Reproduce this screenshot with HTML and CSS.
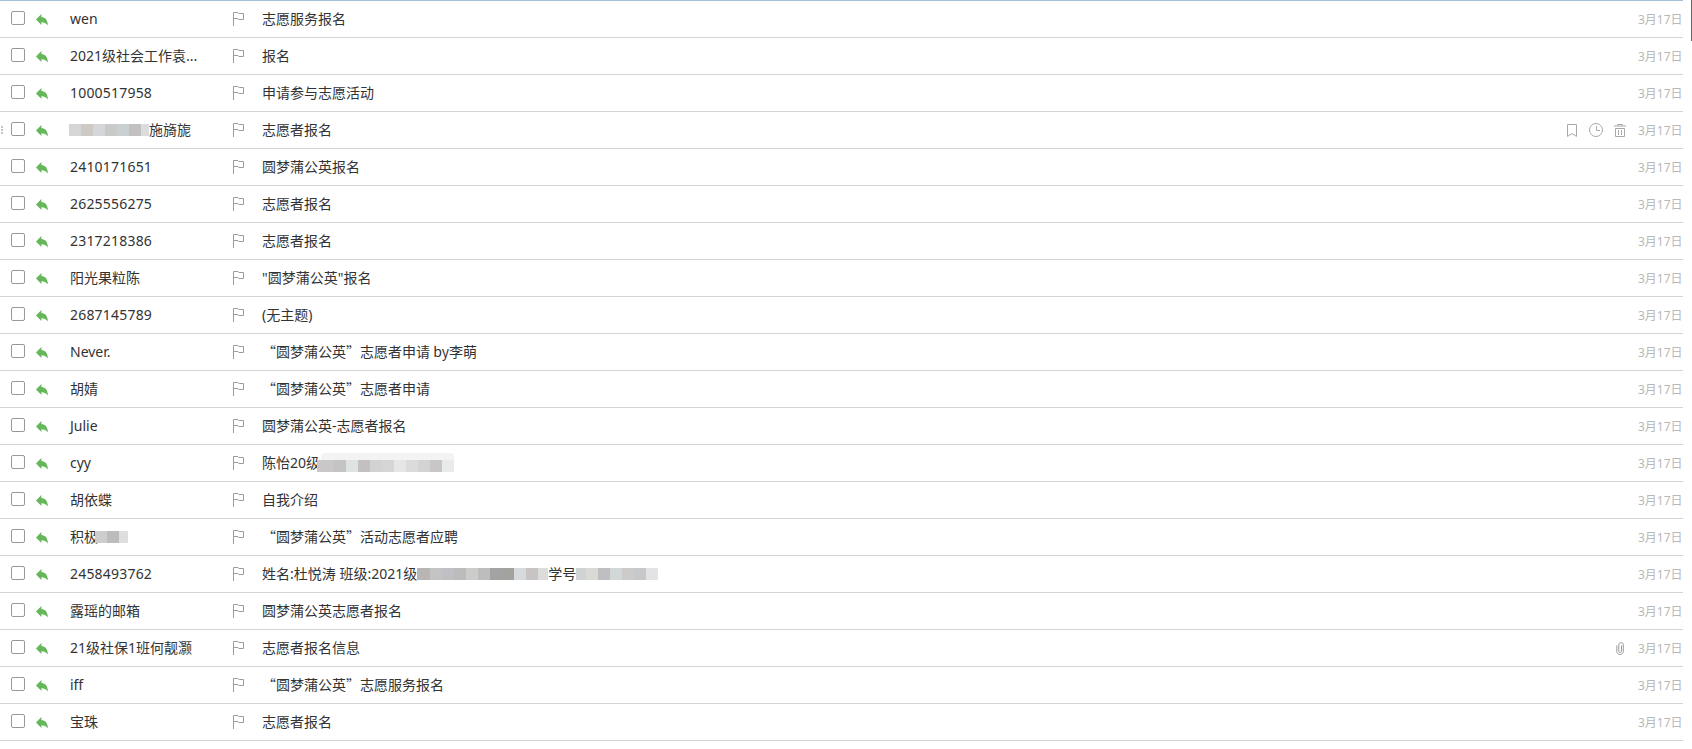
FILE: index.html
```html
<!DOCTYPE html>
<html lang="zh-CN">
<head>
    <meta charset="UTF-8">
    <meta name="viewport" content="width=device-width, initial-scale=1.0">
    <title>收件箱</title>
    <link rel="stylesheet" href="styles.css">
</head>
<body>
    <svg class="defs" width="0" height="0">
        <symbol id="i-reply" viewBox="0 0 12 12"><path d="M0 5.4 L5.4 0 V3.1 C9.2 3.3 11.9 6.2 11.9 11.6 C10.6 9.6 8.6 8.5 5.4 8.3 V11 Z" fill="#65b75a"/></symbol>
        <symbol id="i-flag" viewBox="0 0 11 15"><path d="M.5 15 V1.5 H5 L5.8 2.5 H10.5 V8.5 H5.8 L5 7.5 H.5" fill="none" stroke="#9c9c9c"/></symbol>
        <symbol id="i-bookmark" viewBox="0 0 10 13"><path d="M.5 .5 H9.5 V12.4 L5 9.6 L.5 12.4 Z" fill="none" stroke="#a8a8a8"/></symbol>
        <symbol id="i-clock" viewBox="0 0 14 14"><circle cx="7" cy="7" r="6.5" fill="none" stroke="#a8a8a8"/><path d="M7.5 3 V7.5 H11" fill="none" stroke="#a8a8a8"/></symbol>
        <symbol id="i-trash" viewBox="0 0 12 13"><path d="M3.5 1.5 V.5 H8.5 V1.5 M0 2 H12 M1.5 4.5 H10.5 V12.5 H1.5 Z M4.5 6 V11 M7.5 6 V11" fill="none" stroke="#a8a8a8"/></symbol>
        <symbol id="i-clip" viewBox="0 0 8 13"><path d="M5.5 3.5 V9.5 C5.5 10.8 2.8 10.8 2.8 9.5 V2.5 C2.8 0 7.3 0 7.3 2.5 V9.5 C7.3 13.5 .8 13.5 .8 9.5 V3.5" fill="none" stroke="#9a9a9a"/></symbol>
    </svg>

    <div class="mail-list" id="mailList"></div>
    <div class="scroll-mark"></div>

    <script>
        // mosaic blocks that hide part of a name; first/last are the widths of the cut-off end blocks
        const b = (colors, first = 12, last = 12, cls = '') => {
            const blocks = colors.map((c, i) => {
                const w = i === 0 ? first : i === colors.length - 1 ? last : 12;
                return `<i style="background:${c};width:${w}px"></i>`;
            });
            return `<span class="blur ${cls}">${blocks.join('')}</span>`;
        };

        const mails = [
            { from: 'wen', subject: '志愿服务报名' },
            { from: '2021级社会工作袁...', subject: '报名' },
            { from: '1000517958', subject: '申请参与志愿活动' },
            { from: b(['#d6d5d6', '#cdcac4', '#d5d6da', '#c9c9ca', '#cacfd2', '#c2c0c0', '#dcdcde'], 12, 8, 'pull-name') + '施旖旎', subject: '志愿者报名', hover: true },
            { from: '2410171651', subject: '圆梦蒲公英报名' },
            { from: '2625556275', subject: '志愿者报名' },
            { from: '2317218386', subject: '志愿者报名' },
            { from: '阳光果粒陈', subject: '"圆梦蒲公英"报名' },
            { from: '2687145789', subject: '(无主题)' },
            { from: 'Never.', subject: '“圆梦蒲公英”志愿者申请 by李萌', quote: true },
            { from: '胡婧', subject: '“圆梦蒲公英”志愿者申请', quote: true },
            { from: 'Julie', subject: '圆梦蒲公英-志愿者报名' },
            { from: 'cyy', subject: '陈怡20级' + b(['#c9c7c7', '#c5c4c4', '#dfe3e4', '#c4bfc1', '#d3d2d2', '#d5d5d5', '#e6e6e4', '#dcdbdb', '#d3d3d3', '#c9c6c8', '#e9eaeb'], 17, 12, 'pull haze') },
            { from: '胡依蝶', subject: '自我介绍' },
            { from: '积极' + b(['#cdcdcd', '#bdbcbd', '#dddedf'], 12, 9, 'pull'), subject: '“圆梦蒲公英”活动志愿者应聘', quote: true },
            { from: '2458493762', subject: '姓名:杜悦涛 班级:2021级' + b(['#b9b5b5', '#c3c3c3', '#c0c0c4', '#bcbcbc', '#cccccb', '#bdbdbd', '#a3a3a3', '#a2a29e', '#d6dadc', '#c9c4c4', '#dcdcdc'], 13, 10) + '学号' + b(['#d0d3d5', '#d9dad6', '#bfbec2', '#d2d7d8', '#cdcbca', '#c6c8ca', '#e3e3e6'], 10, 12) },
            { from: '露瑶的邮箱', subject: '圆梦蒲公英志愿者报名' },
            { from: '21级社保1班何靓灏', subject: '志愿者报名信息', clip: true },
            { from: 'iff', subject: '“圆梦蒲公英”志愿服务报名', quote: true },
            { from: '宝珠', subject: '志愿者报名' }
        ];

        const icon = (name, cls) => `<svg class="${cls}"><use href="#i-${name}"/></svg>`;

        function loadMails() {
            const list = document.getElementById('mailList');
            mails.forEach(mail => {
                const row = document.createElement('div');
                row.className = 'mail-row';
                let tools = '';
                let grip = '';
                if (mail.hover) {
                    tools = icon('bookmark', 'ic-bookmark') + icon('clock', 'ic-clock') + icon('trash', 'ic-trash');
                    grip = '<span class="grip"></span>';
                }
                if (mail.clip) {
                    tools = icon('clip', 'ic-clip');
                }
                const digits = /^\d+$/.test(mail.from) ? ' digits' : '';
                row.innerHTML = `
                    ${grip}
                    <span class="check"></span>
                    ${icon('reply', 'ic-reply')}
                    <span class="from${digits}">${mail.from}</span>
                    ${icon('flag', 'ic-flag')}
                    <span class="subject${mail.quote ? ' quoted' : ''}">${mail.subject}</span>
                    <span class="tools${mail.clip ? ' tools-clip' : ''}">${tools}</span>
                    <span class="date">3月17日</span>
                `;
                list.appendChild(row);
            });
        }

        loadMails();
    </script>
</body>
</html>
```
FILE: styles.css
```css
html, body {
    margin: 0;
    padding: 0;
    background-color: #fff;
    overflow: hidden;
}
body {
    font-family: "Noto Sans", "Noto Sans CJK SC", sans-serif;
    font-size: 14px;
    color: #333;
    height: 749px;
    position: relative;
}
.defs {
    position: absolute;
}
.mail-list {
    width: 1683px;
    border-top: 1px solid #a5bfd6;
}
.mail-row {
    position: relative;
    display: flex;
    align-items: center;
    height: 36px;
    padding-left: 11px;
    border-bottom: 1px solid #d4d4d4;
}
.grip {
    position: absolute;
    left: 1px;
    top: 14px;
    width: 2px;
    height: 8px;
    background: repeating-linear-gradient(#c4c4c4 0 2px, transparent 2px 3px);
}
.check {
    flex: none;
    width: 12px;
    height: 12px;
    margin-top: -2px;
    border: 1px solid #999;
    border-radius: 2px;
}
.ic-reply {
    flex: none;
    width: 12px;
    height: 12px;
    margin: 1px 0 0 11px;
}
.from {
    flex: none;
    width: 163px;
    margin-left: 22px;
    white-space: nowrap;
    line-height: 20px;
}
.digits {
    letter-spacing: .2px;
}
.ic-flag {
    flex: none;
    width: 11px;
    height: 15px;
    margin-top: -1px;
}
.subject {
    flex: 1;
    margin-left: 18px;
    white-space: nowrap;
    line-height: 20px;
}
.quoted {
    margin-top: -2px;
    font-family: "Noto Sans CJK SC", sans-serif;
}
.blur {
    display: inline-flex;
    position: relative;
    height: 12px;
    vertical-align: -1px;
}
.blur i {
    height: 12px;
}
.pull {
    margin-left: -3px;
}
.pull-name {
    margin-left: -1px;
}
.haze {
    vertical-align: -4px;
}
.haze::before {
    content: "";
    position: absolute;
    left: 4px;
    right: 0;
    top: -7px;
    height: 7px;
    background-color: #f3f3f3;
    border-radius: 4px 4px 0 0;
}
.tools {
    display: flex;
    align-items: center;
    gap: 12px;
    margin-right: 12px;
}
.tools-clip {
    margin-right: 14px;
}
.ic-bookmark { width: 10px; height: 13px; }
.ic-clock { width: 14px; height: 14px; margin-right: -1px; }
.ic-trash { width: 12px; height: 13px; }
.ic-clip { width: 8px; height: 13px; }
.date {
    flex: none;
    width: 43px;
    margin-right: 2px;
    font-size: 12px;
    color: #b8b8b8;
    white-space: nowrap;
}
.scroll-mark {
    position: absolute;
    right: 0;
    top: 0;
    width: 1px;
    height: 41px;
    background-color: #666;
}
```
